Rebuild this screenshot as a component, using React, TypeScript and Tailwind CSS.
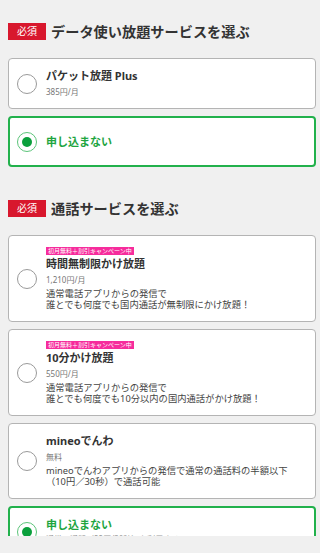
type Option = {
  title: string;
  price?: string;
  tag?: string;
  desc?: string[];
  selected?: boolean;
};

const dataOptions: Option[] = [
  { title: "パケット放題 Plus", price: "385円/月" },
  { title: "申し込まない", selected: true },
];

const callOptions: Option[] = [
  {
    tag: "初月無料＋割引キャンペーン中",
    title: "時間無制限かけ放題",
    price: "1,210円/月",
    desc: ["通常電話アプリからの発信で", "誰とでも何度でも国内通話が無制限にかけ放題！"],
  },
  {
    tag: "初月無料＋割引キャンペーン中",
    title: "10分かけ放題",
    price: "550円/月",
    desc: ["通常電話アプリからの発信で", "誰とでも何度でも10分以内の国内通話がかけ放題！"],
  },
  {
    title: "mineoでんわ",
    price: "無料",
    desc: ["mineoでんわアプリからの発信で通常の通話料の半額以下", "（10円／30秒）で通話可能"],
  },
  {
    title: "申し込まない",
    price: "通常の通話（22円/30秒）を利用する",
    selected: true,
  },
];

function Radio({ on }: { on?: boolean }) {
  if (on) {
    return (
      <div className="w-5 h-5 shrink-0 rounded-full border-[1.5px] border-[#5cc47a] flex items-center justify-center">
        <div className="w-[10px] h-[10px] rounded-full bg-[#0aa03c]" />
      </div>
    );
  }
  return <div className="w-5 h-5 shrink-0 rounded-full border-[1.5px] border-[#9a9a9a] bg-white" />;
}

function Card({ o }: { o: Option }) {
  return (
    <div
      className={
        o.selected
          ? "bg-white rounded-[4px] border-2 border-[#22b14c] min-h-[51px] flex items-center pl-[7px] pr-2 py-[9px]"
          : "bg-white rounded-[4px] border border-[#b4b4b4] min-h-[51px] flex items-center pl-2 pr-2 py-[10px]"
      }
    >
      <Radio on={o.selected} />
      <div className="ml-[9px] flex flex-col">
        {o.tag && (
          <span className="self-start bg-[#f62c9c] text-white text-[6px] leading-[8px] px-[2px] mb-[2px] mt-px">
            {o.tag}
          </span>
        )}
        <div
          className={
            o.selected
              ? "text-[11px] leading-[14px] font-bold text-[#1ea53f]"
              : "text-[11px] leading-[14px] font-bold text-[#333]"
          }
        >
          {o.title}
        </div>
        {o.price && (
          <div className={o.selected ? "mt-[1px] text-[8px] leading-[12px] text-[#9a9a9a]" : "mt-[3px] text-[8px] leading-[12px] text-[#777]"}>
            {o.price}
          </div>
        )}
        {o.desc && (
          <div className="mt-[2px] mb-px text-[9.3px] leading-[11px] text-[#444]">
            {o.desc.map((l) => (
              <div key={l}>{l}</div>
            ))}
          </div>
        )}
      </div>
    </div>
  );
}

function Section({ title, options }: { title: string; options: Option[] }) {
  return (
    <section>
      <div className="flex items-center h-[17px]">
        <span className="w-[38px] h-[17px] bg-[#d8172d] text-white text-[10px] leading-[17px] text-center">必須</span>
        <h2 className="ml-[5px] text-[14.2px] font-bold text-[#333] leading-[17px]">{title}</h2>
      </div>
      <div className="mt-[18px] flex flex-col gap-[7px]">
        {options.map((o, i) => (
          <Card key={i} o={o} />
        ))}
      </div>
    </section>
  );
}

export default function App() {
  return (
    <div
      className="min-h-screen bg-[#f0f0f0] pt-[23px] pl-2 pr-[4px] pb-10"
      style={{ fontFamily: '"Noto Sans", "Noto Sans CJK JP", sans-serif' }}
    >
      <Section title="データ使い放題サービスを選ぶ" options={dataOptions} />
      <div className="h-[33px]" />
      <Section title="通話サービスを選ぶ" options={callOptions} />
      <div className="fixed bottom-0 left-0 right-0 h-[17px] bg-[#f0f0f0]" />
    </div>
  );
}
